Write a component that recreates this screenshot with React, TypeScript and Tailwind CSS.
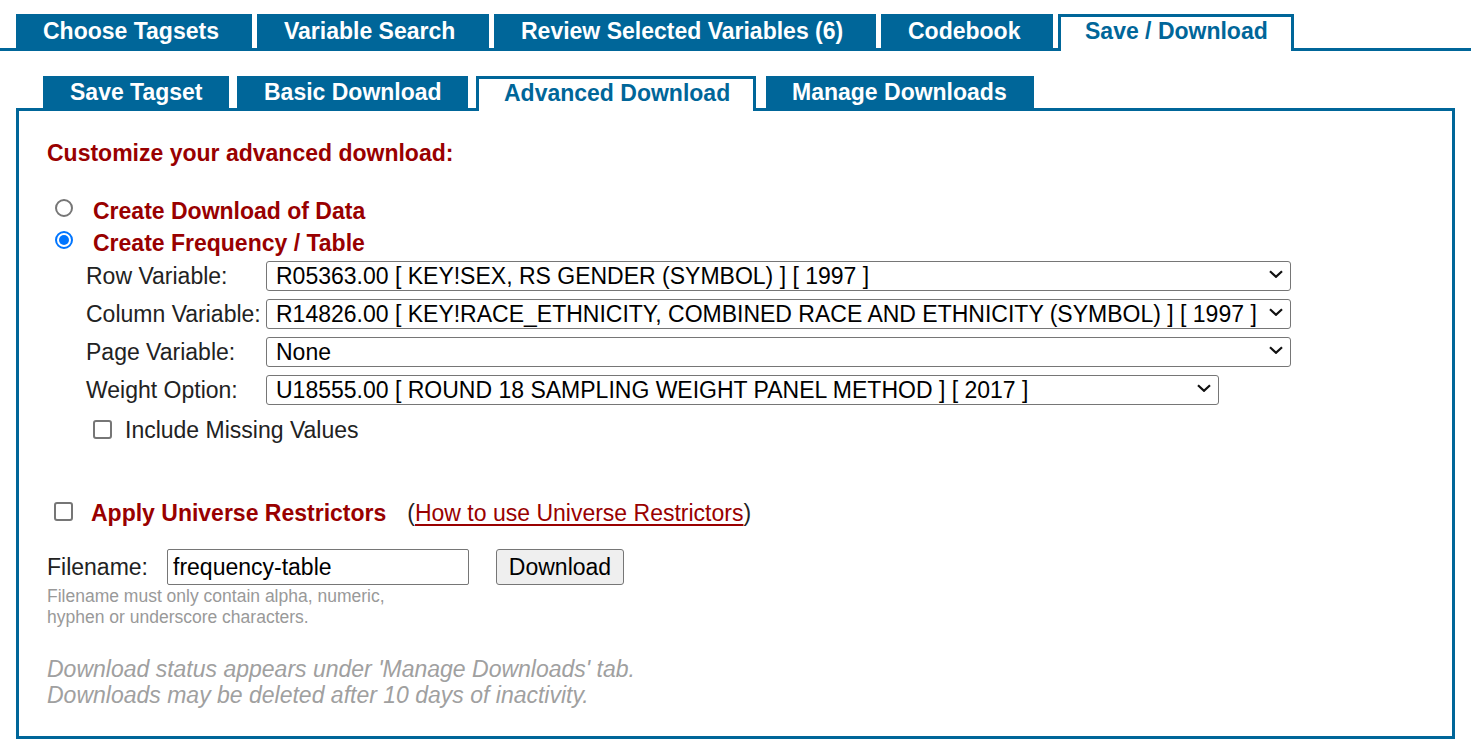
import React from "react";

const font = { fontFamily: '"Liberation Sans", Arial, sans-serif' };

const topTabs = [
  { label: "Choose Tagsets", w: "w-[236px]" },
  { label: "Variable Search", w: "w-[232px]" },
  { label: "Review Selected Variables (6)", w: "w-[382px]" },
  { label: "Codebook", w: "w-[172px]" },
];

const subTabs = [
  { label: "Save Tagset", w: "w-[186px]" },
  { label: "Basic Download", w: "w-[231px]" },
];

function Chevron() {
  return (
    <svg
      className="pointer-events-none absolute right-[8px] top-[11px]"
      width="14"
      height="8"
      viewBox="0 0 14 8"
      fill="none"
    >
      <path d="M1 1.2 L7 6.8 L13 1.2" stroke="#111" strokeWidth="2.2" />
    </svg>
  );
}

function SelectRow({ label, value, w }: { label: string; value: string; w: string }) {
  return (
    <div className="flex h-[30px] items-center">
      <span className="w-[180px] shrink-0 pt-[4px] text-[#222]">{label}</span>
      <div className={`relative h-[30px] ${w}`}>
        <select
          defaultValue={value}
          className="h-[30px] w-full appearance-none rounded-[3px] border border-[#767676] bg-white pl-[9px] pr-[22px] text-[23px] leading-[28px] text-black outline-none"
          style={font}
        >
          <option value={value}>{value}</option>
        </select>
        <Chevron />
      </div>
    </div>
  );
}

function Radio({ checked }: { checked?: boolean }) {
  if (checked) {
    return (
      <span className="flex h-[18px] w-[18px] items-center justify-center rounded-full border-[2px] border-[#0075ff] bg-white p-[2px]">
        <span className="h-full w-full rounded-full bg-[#0075ff]" />
      </span>
    );
  }
  return <span className="block h-[18px] w-[18px] rounded-full border-[2px] border-[#767676] bg-white" />;
}

function Checkbox() {
  return <span className="block h-[19px] w-[19px] rounded-[3px] border-[2px] border-[#767676] bg-white" />;
}

export default function App() {
  return (
    <div className="min-h-screen bg-white pt-[14px] text-[23px] text-[#222]" style={font}>
      {/* top tabs */}
      <div className="flex items-end gap-[5px] border-b-[3px] border-[#006699] pl-[16px]">
        {topTabs.map((t) => (
          <div
            key={t.label}
            className={`flex h-[34px] items-center bg-[#006699] pl-[27px] font-bold text-white ${t.w}`}
          >
            <span className="whitespace-nowrap leading-none">{t.label}</span>
          </div>
        ))}
        <div className="relative -mb-[3px] flex h-[37px] w-[236px] items-center border-x-[3px] border-t-[3px] border-[#006699] bg-white pb-[6px] pl-[24px] font-bold text-[#006699]">
          <span className="whitespace-nowrap leading-none">Save / Download</span>
        </div>
      </div>

      <div className="mx-[16px] mt-[25px]">
        {/* sub tabs */}
        <div className="relative z-10 flex items-end gap-[8px] pl-[27px]">
          {subTabs.map((t) => (
            <div
              key={t.label}
              className={`flex h-[32px] items-center bg-[#006699] pl-[27px] font-bold text-white ${t.w}`}
            >
              <span className="whitespace-nowrap leading-none">{t.label}</span>
            </div>
          ))}
          <div className="-mb-[3px] flex h-[35px] w-[280px] items-center border-x-[3px] border-t-[3px] border-[#006699] bg-white pb-[4px] pl-[25px] font-bold text-[#006699]">
            <span className="whitespace-nowrap leading-none">Advanced Download</span>
          </div>
          <div className="ml-[2px] flex h-[32px] w-[268px] items-center bg-[#006699] pl-[26px] font-bold text-white">
            <span className="whitespace-nowrap leading-none">Manage Downloads</span>
          </div>
        </div>

        {/* content box */}
        <div className="h-[631px] border-[3px] border-[#006699] pl-[28px] pt-[29px]">
          <h2 className="text-[23px] font-bold leading-[26px] text-[#990000]">
            Customize your advanced download:
          </h2>

          <div className="mt-[29px] flex h-[32px] items-center">
            <span className="ml-[8px] -mt-[6px]">
              <Radio />
            </span>
            <span className="ml-[20px] font-bold text-[#990000]">Create Download of Data</span>
          </div>
          <div className="flex h-[32px] items-center">
            <span className="ml-[8px] -mt-[6px]">
              <Radio checked />
            </span>
            <span className="ml-[20px] font-bold text-[#990000]">Create Frequency / Table</span>
          </div>

          <div className="ml-[39px] flex flex-col gap-[8px]">
            <SelectRow
              label="Row Variable:"
              value="R05363.00 [ KEY!SEX, RS GENDER (SYMBOL) ] [ 1997 ]"
              w="w-[1025px]"
            />
            <SelectRow
              label="Column Variable:"
              value="R14826.00 [ KEY!RACE_ETHNICITY, COMBINED RACE AND ETHNICITY (SYMBOL) ] [ 1997 ]"
              w="w-[1025px]"
            />
            <SelectRow label="Page Variable:" value="None" w="w-[1025px]" />
            <SelectRow
              label="Weight Option:"
              value="U18555.00 [ ROUND 18 SAMPLING WEIGHT PANEL METHOD ] [ 2017 ]"
              w="w-[953px]"
            />
          </div>

          <div className="ml-[46px] mt-[12px] flex h-[30px] items-center">
            <span className="-mt-[2px]">
              <Checkbox />
            </span>
            <span className="ml-[13px]">Include Missing Values</span>
          </div>

          <div className="mt-[52px] flex h-[32px] items-center">
            <span className="ml-[7px] -mt-[4px]">
              <Checkbox />
            </span>
            <span className="ml-[18px] font-bold text-[#990000]">Apply Universe Restrictors</span>
            <span className="ml-[21px]">
              (
              <a href="#" className="text-[#990000] underline underline-offset-[3px]">
                How to use Universe Restrictors
              </a>
              )
            </span>
          </div>

          <div className="mt-[20px] flex h-[36px] items-center">
            <span className="w-[120px]">Filename:</span>
            <input
              defaultValue="frequency-table"
              className="h-[36px] w-[302px] rounded-[2px] border border-[#767676] bg-white pl-[5px] text-[23px] text-black outline-none"
              style={font}
            />
            <button
              className="ml-[27px] h-[36px] w-[128px] rounded-[3px] border border-[#767676] bg-[#efefef] text-[23px] text-black"
              style={font}
            >
              Download
            </button>
          </div>

          <p className="mt-[1px] text-[17.5px] leading-[21px] text-[#999999]">
            Filename must only contain alpha, numeric,
            <br />
            hyphen or underscore characters.
          </p>

          <p className="mt-[28px] text-[23px] italic leading-[26px] text-[#a0a0a0]">
            Download status appears under 'Manage Downloads' tab.
            <br />
            Downloads may be deleted after 10 days of inactivity.
          </p>
        </div>
      </div>
    </div>
  );
}
